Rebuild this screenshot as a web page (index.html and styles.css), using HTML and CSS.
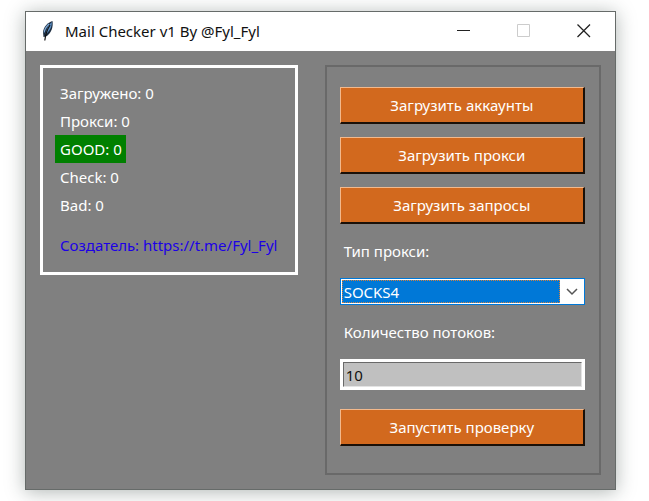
FILE: index.html
```html
<!DOCTYPE html>
<html lang="ru">

<head>
    <meta charset="UTF-8">
    <meta name="viewport" content="width=device-width, initial-scale=1.0">
    <title>Mail Checker v1 By @Fyl_Fyl</title>
    <link rel="stylesheet" href="styles.css">
</head>

<body>
    <div class="window">
        <header class="titlebar">
            <svg class="feather" viewBox="0 0 14 22" width="14" height="22" aria-hidden="true">
                <path d="M11.500 1C6.500 2.500 2.500 7 2 12L2.500 17L5 16.500C10 14 12.500 7 11.500 1Z" fill="#1c2c40" />
                <path d="M10.800 2C7.500 5 5.500 9 4.500 14.500C8.800 11 11 7 10.800 2Z" fill="#5b8fc4" />
                <path d="M8 4C5.500 6.500 3.500 9.500 3.200 12.500" fill="none" stroke="#7ba6d2" stroke-width="1.300" />
                <path d="M9 5C6.500 9 4.500 14 3.800 20.500" fill="none" stroke="#111" stroke-width="1.200" />
            </svg>
            <h1>Mail Checker v1 By @Fyl_Fyl</h1>
            <div class="controls">
                <button type="button" class="control" aria-label="Свернуть">
                    <svg viewBox="0 0 14 14" width="14" height="14"><path d="M0 6.500H13" /></svg>
                </button>
                <button type="button" class="control" aria-label="Развернуть" disabled>
                    <svg viewBox="0 0 14 14" width="14" height="14"><path d="M.5 .5H12.500V12.500H.5Z" /></svg>
                </button>
                <button type="button" class="control" aria-label="Закрыть">
                    <svg viewBox="0 0 14 14" width="14" height="14"><path d="M.5 .5L13 13M13 .5L.5 13" stroke-width="1.300" /></svg>
                </button>
            </div>
        </header>

        <main class="content">
            <section class="stats">
                <p>Загружено: 0</p>
                <p>Прокси: 0</p>
                <p class="good">GOOD: 0</p>
                <p>Check: 0</p>
                <p>Bad: 0</p>
                <a class="creator" href="https://t.me/Fyl_Fyl">Создатель: https://t.me/Fyl_Fyl</a>
            </section>

            <form class="settings">
                <button type="button" class="action">Загрузить аккаунты</button>
                <button type="button" class="action">Загрузить прокси</button>
                <button type="button" class="action">Загрузить запросы</button>

                <label for="proxy-type">Тип прокси:</label>
                <div class="combo">
                    <select id="proxy-type">
                        <option>HTTP</option>
                        <option selected>SOCKS4</option>
                        <option>SOCKS5</option>
                    </select>
                    <svg class="arrow" viewBox="0 0 12 8" width="12" height="8" aria-hidden="true">
                        <path d="M1 1L6 6L11 1" />
                    </svg>
                </div>

                <label for="threads">Количество потоков:</label>
                <div class="entry">
                    <input type="text" id="threads" value="10">
                </div>

                <button type="button" class="action start">Запустить проверку</button>
            </form>
        </main>
    </div>
</body>

</html>
```
FILE: styles.css
```css
* {
    box-sizing: border-box;
}

body {
    margin: 0;
    padding: 11px 33px 12px 25px;
    min-height: 100vh;
    display: flex;
    background: #fff;
    font-family: 'Noto Sans', 'Open Sans', sans-serif;
    font-size: 15px;
    line-height: 28px;
}

.window {
    flex: 1;
    display: flex;
    flex-direction: column;
    background: #808080;
    border: 1px solid #666b69;
    box-shadow: 0 2px 18px rgba(30, 45, 40, 0.35);
}

.titlebar {
    display: flex;
    align-items: center;
    height: 39px;
    padding: 0 1px 2px 15px;
    background: #fff;
}

.feather {
    flex: none;
}

h1 {
    flex: 1;
    margin: 0 0 0 10px;
    font-size: 15px;
    font-weight: 400;
    color: #111;
    white-space: nowrap;
}

.controls {
    display: flex;
}

.control {
    display: flex;
    align-items: center;
    justify-content: center;
    width: 60px;
    height: 36px;
    padding: 0;
    border: none;
    background: none;
}

.control svg {
    fill: none;
    stroke: #222;
}

.control:disabled svg {
    stroke: #ccc;
}

.content {
    flex: 1;
    display: flex;
    align-items: flex-start;
    gap: 27px;
    padding: 14px;
}

.stats {
    flex: 257;
    min-width: 0;
    display: flex;
    flex-direction: column;
    align-items: flex-start;
    padding: 11px 12px 13px;
    border: 3px solid #fff;
    color: #fff;
}

.stats p {
    margin: 0;
    padding: 0 4px 0 5px;
}

.stats .good {
    background: #008000;
}

.creator {
    margin-top: 12px;
    padding: 0 4px 0 5px;
    color: #1c00e6;
    text-decoration: none;
    white-space: nowrap;
}

.settings {
    flex: 277;
    min-width: 0;
    display: flex;
    flex-direction: column;
    padding: 20px 14px 27px 13px;
    border: 2px solid #696969;
    color: #fff;
}

.action {
    height: 37px;
    margin-bottom: 13px;
    padding: 0;
    border: 2px solid;
    border-width: 1px 2px 2px 1px;
    border-color: #f3b98c #1a1008 #1a1008 #f3b98c;
    background: #d2691e;
    color: #fff;
    font: inherit;
}

.settings label {
    padding-left: 4px;
}

.combo {
    display: grid;
    align-items: center;
    height: 27px;
    margin: 13px 0;
    padding: 1px;
    border: 1px solid #0078d7;
    background: #fff;
}

.combo select,
.combo .arrow {
    grid-area: 1 / 1;
}

.combo select {
    appearance: none;
    height: 23px;
    margin-right: 23px;
    padding: 0 1px;
    border: 1px dotted #d08040;
    border-radius: 0;
    background: #0078d7;
    color: #fff;
    font: inherit;
    line-height: 20px;
}

.combo .arrow {
    justify-self: end;
    margin-right: 5px;
    fill: none;
    stroke: #555;
    stroke-width: 1.5;
    pointer-events: none;
}

.entry {
    display: flex;
    margin: 13px 0 19px;
    padding: 3px;
    background: #fff;
}

.entry input {
    flex: 1;
    min-width: 0;
    height: 25px;
    padding: 0 2px;
    border: 1px solid;
    border-color: #696969 #e3e3e3 #e3e3e3 #696969;
    background: #c0c0c0;
    color: #111;
    font: inherit;
}

.action.start {
    margin-bottom: 0;
}
```
